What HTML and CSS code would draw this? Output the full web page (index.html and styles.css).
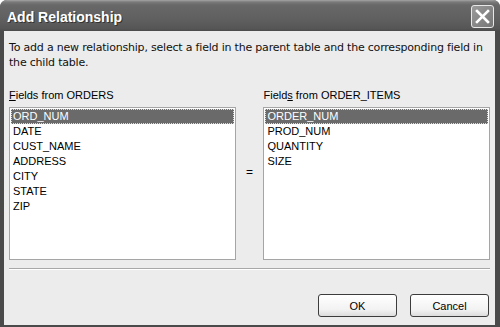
FILE: index.html
```html
<!DOCTYPE html>
<html lang="en">
<head>
    <meta charset="UTF-8">
    <meta name="viewport" content="width=device-width, initial-scale=1.0">
    <title>Add Relationship</title>
    <link rel="stylesheet" href="styles.css">
</head>
<body>
<div class="window">
    <div class="titlebar">
        <span class="title">Add Relationship</span>
        <button class="close" aria-label="Close">
            <svg width="15" height="15" viewBox="0 0 15 15">
                <path d="M2 2 L13 13 M13 2 L2 13" stroke="#fff" stroke-width="2.6" stroke-linecap="square"/>
            </svg>
        </button>
    </div>
    <div class="client">
        <p class="intro">To add a new relationship, select a field in the parent table and the corresponding field in the child table.</p>
        <div class="lists">
            <div class="field-group">
                <label class="caption"><u>F</u>ields from ORDERS</label>
                <ul class="listbox">
                    <li class="selected"><span>ORD_NUM</span></li>
                    <li><span>DATE</span></li>
                    <li><span>CUST_NAME</span></li>
                    <li><span>ADDRESS</span></li>
                    <li><span>CITY</span></li>
                    <li><span>STATE</span></li>
                    <li><span>ZIP</span></li>
                </ul>
            </div>
            <div class="equals">=</div>
            <div class="field-group">
                <label class="caption">Field<u>s</u> from ORDER_ITEMS</label>
                <ul class="listbox">
                    <li class="selected"><span>ORDER_NUM</span></li>
                    <li><span>PROD_NUM</span></li>
                    <li><span>QUANTITY</span></li>
                    <li><span>SIZE</span></li>
                </ul>
            </div>
        </div>
        <div class="separator"></div>
        <div class="buttons">
            <button class="btn">OK</button>
            <button class="btn">Cancel</button>
        </div>
    </div>
</div>
</body>
</html>
```
FILE: styles.css
```css
body{
    margin: 0;
    background: #fff;
    font-family: "Liberation Sans", Arial, sans-serif;
    font-size: 11px;
    color: #000;
}
.window{
    width: 500px;
    height: 327px;
    display: flex;
    flex-direction: column;
    background: #4a4a4a;
    border-radius: 7px 7px 0 0;
    overflow: hidden;
}
.titlebar{
    height: 31px;
    flex: none;
    display: flex;
    align-items: center;
    justify-content: space-between;
    padding: 0 6px 0 7px;
    background: linear-gradient(#a4a4a4 0, #7a7a7a 2px, #686868 5px, #5f5f5f 20px, #555 29px, #4a4a4a 31px);
}
.title{
    color: #fff;
    font-weight: bold;
    font-size: 14px;
    text-shadow: 1px 1px 0 #333;
    padding-top: 2px;
}
.close{
    width: 23px;
    height: 23px;
    margin-top: 2px;
    padding: 0;
    border: 1px solid #e8e8e8;
    border-radius: 3px;
    background: linear-gradient(135deg, #9a9a9a, #767676);
    display: flex;
    align-items: center;
    justify-content: center;
}
.client{
    flex: 1;
    margin: 0 5px 4px 4px;
    padding: 9px 5px 8px 5px;
    background: #ececec;
    display: flex;
    flex-direction: column;
}
.intro{
    margin: 0;
    line-height: 15px;
    font-family: "DejaVu Sans", Tahoma, sans-serif;
    font-size: 11px;
    letter-spacing: -0.2px;
    color: #111;
}
.lists{
    display: flex;
    margin-top: 18px;
}
.field-group{
    width: 227px;
    display: flex;
    flex-direction: column;
}
.caption{
    line-height: 15px;
    margin-bottom: 4px;
}
.listbox{
    list-style: none;
    margin: 0;
    padding: 1px 1px;
    height: 149px;
    border: 1px solid #a5a5a5;
    background: #fff;
}
.listbox li{
    height: 15px;
    line-height: 15px;
    padding-left: 2px;
}
.listbox li.selected{
    background: #6a6a6a;
    color: #fff;
    outline: 1px dotted #ddd;
    outline-offset: -1px;
}
.equals{
    width: 28px;
    text-align: center;
    padding-top: 77px;
    font-size: 12px;
}
.separator{
    height: 1px;
    margin-top: 8px;
    border-top: 1px solid #a8a8a8;
    background: #fff;
}
.buttons{
    display: flex;
    justify-content: flex-end;
    gap: 13px;
    margin-top: 24px;
    padding-right: 1px;
}
.btn{
    width: 79px;
    height: 23px;
    border: 1px solid #3c3c3c;
    border-radius: 3px;
    background: linear-gradient(#fff, #f2f2f2 70%, #dcdcdc);
    font-family: "Liberation Sans", Arial, sans-serif;
    font-size: 11px;
    color: #000;
}
```
